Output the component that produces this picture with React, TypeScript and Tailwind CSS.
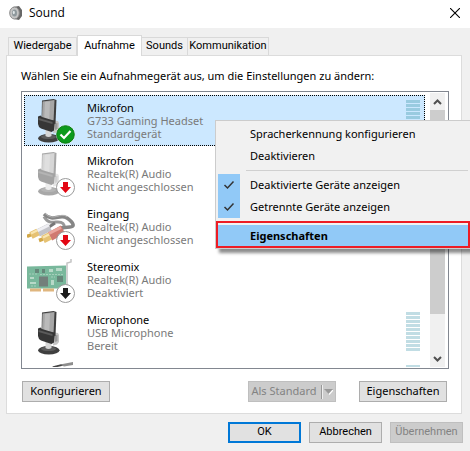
import { ReactNode } from 'react';
import { clsx } from 'clsx';

type Status = 'default' | 'unplugged' | 'disabled';

interface Device {
  name: string;
  driver: string;
  state: string;
  icon: ReactNode;
  status?: Status;
  meter?: boolean;
  selected?: boolean;
}

const Microphone = () => (
  <g>
    <ellipse cx="21.800" cy="42.200" rx="10.700" ry="4.300" fill="#3f3f3f" />
    <ellipse cx="21.500" cy="40.800" rx="7.500" ry="2.300" fill="#5c5c5c" />
    <path d="M18.500 34h6v6q-3 1.800-6 0z" fill="#d6d6d6" />
    <path d="M27 24.500l4 .5 1 2v7l-2 2.500-4 1z" fill="#c6c6c6" />
    <path d="M28 27.500l2.500-.5v6l-2.500 1z" fill="#9a9a9a" />
    <path d="M15 4.500l11.500-1.500 3 1-1 24-14-3z" fill="#3d3d3d" />
    <path d="M15.500 5.500l12-1.500-1 22-11.500-2z" fill="#a6a6a6" />
    <path d="M18 6l5-.6-.8 18.500-5-.8z" fill="#bababa" />
    <path d="M11 20.500l2.500-1 1.500 1.500 10 3 3 .5-1 10-2.500 1.500L14 32.500l-2-1.500-1-3z" fill="#363636" />
    <path d="M11.500 22l14 4v2l-14-4z" fill="#5b5b5b" />
  </g>
);

const LineIn = () => (
  <g fill="none">
    <path d="M17 14.500c6 11 14 2 19 7 2 2 1 4-2 6" stroke="#999" strokeWidth="3" />
    <path d="M17 12c9 9 16-1 23 4 7 5 8 9 3 9l-10 1" stroke="#868686" strokeWidth="3.500" />
    <path d="M18 11.500c9 8.500 15-1.500 22 3" stroke="#b4b4b4" strokeWidth="1" />
    <path d="M22 25l6-4" stroke="#777" strokeWidth="3" />
    <path d="M11 31l12-6" stroke="#c3c3c8" strokeWidth="8" />
    <path d="M10 29l12-6" stroke="#efeff3" strokeWidth="3" />
    <path d="M0 34.500l5-2" stroke="#d3a848" strokeWidth="3.500" />
    <path d="M4 33.500l7-3.500" stroke="#e6c273" strokeWidth="7.500" />
    <path d="M4 31.500l6-3" stroke="#f9e6b0" strokeWidth="2" />
    <path d="M23 34.500l13-7" stroke="#d07a70" strokeWidth="9" />
    <path d="M22 31.500l12-6" stroke="#eaa79e" strokeWidth="3" />
    <path d="M12 38.500l4-1.500" stroke="#d3a848" strokeWidth="3.500" />
    <path d="M16 37.500l7-3.500" stroke="#e6c273" strokeWidth="8" />
    <path d="M16 35.500l6-3" stroke="#f9e6b0" strokeWidth="2" />
  </g>
);

const SoundCard = () => (
  <g>
    <path d="M0 11.500l39-1v23H0z" fill="#79b89c" />
    <path d="M3 33.500h11v3H3zM16 33.500h11v3H16z" fill="#dfb67f" />
    <path d="M40 39V8l4-1V4" fill="none" stroke="#c4c4c4" strokeWidth="1.500" />
    <path d="M12 21.500h9v10h-9z" fill="#737f7b" />
    <path d="M30 21h6v6h-6zM8 14h4v4H8zM15 14h3v4h-3z" fill="#66877a" />
    <path d="M22 14h4v3h-4zM29 13h6v3h-6zM3 22h4v2H3zM3 27h6v2H3zM24 25h3v5h-3z" fill="#b8d9c8" />
    <path d="M2 19h8M13 19.500h24M24 22h4M4 31h6" stroke="#a5cfba" strokeDasharray="2 1" />
  </g>
);

const Jack = () => (
  <g>
    <path d="M25 5.500l10-2.500 2 1.500-9 2z" fill="#444" />
    <path d="M33 3.500l13-2.500v3l-9 1.500z" fill="#8d8d8d" />
  </g>
);

const devices: Device[] = [
  { name: 'Mikrofon', driver: 'G733 Gaming Headset', state: 'Standardgerät', icon: <Microphone />, status: 'default', meter: true, selected: true },
  { name: 'Mikrofon', driver: 'Realtek(R) Audio', state: 'Nicht angeschlossen', icon: <g opacity="0.45"><Microphone /></g>, status: 'unplugged' },
  { name: 'Eingang', driver: 'Realtek(R) Audio', state: 'Nicht angeschlossen', icon: <LineIn />, status: 'unplugged' },
  { name: 'Stereomix', driver: 'Realtek(R) Audio', state: 'Deaktiviert', icon: <SoundCard />, status: 'disabled' },
  { name: 'Microphone', driver: 'USB Microphone', state: 'Bereit', icon: <Microphone />, meter: true },
  { name: '', driver: '', state: '', icon: <Jack />, meter: true },
];

const Badge = ({ status }: { status: Status }) => {
  if (status === 'default') {
    return (
      <g>
        <circle cx="38.500" cy="38.500" r="9.500" fill="#fff" />
        <circle cx="38.500" cy="38.500" r="8.800" fill="#0c9a1c" stroke="#087a14" />
        <path d="M33.500 38.500l3.500 3.500 6.500-7" fill="none" stroke="#fff" strokeWidth="2.200" />
      </g>
    );
  }
  return (
    <g>
      <circle cx="38.500" cy="38.500" r="9" fill="#fff" stroke="#9a9a9a" />
      <path
        d="M36 33h5v5h3l-5.500 6-5.500-6h3z"
        fill={status === 'unplugged' ? '#e30613' : '#1c1c1c'}
      />
    </g>
  );
};

const Meter = ({ active }: { active?: boolean }) => (
  <div className="mr-1 flex w-[14px] shrink-0 flex-col gap-px pt-1">
    {Array.from({ length: 10 }, (_, i) => (
      <span key={i} className={clsx('h-[3px]', active ? 'bg-[#99cbe0]' : 'bg-[#c1dde4]')} />
    ))}
  </div>
);

const DeviceRow = ({ device }: { device: Device }) => (
  <li className="h-[53px]">
    <div
      className={clsx(
        'flex h-[51px] border border-dotted',
        device.selected ? 'border-black bg-[#cce8ff]' : 'border-transparent'
      )}
    >
      <svg className="ml-[2px] h-12 w-12 shrink-0" viewBox="0 0 48 48">
        {device.icon}
        {device.status && <Badge status={device.status} />}
      </svg>
      <div className="ml-3 min-w-0 grow pt-[5px] leading-[13px] whitespace-nowrap text-[#7a7a7a]">
        <p className="text-black">{device.name}</p>
        <p>{device.driver}</p>
        <p>{device.state}</p>
      </div>
      {device.meter && <Meter active={device.selected} />}
    </div>
  </li>
);

const Chevron = ({ up }: { up?: boolean }) => (
  <svg className="h-[17px] w-[15px] shrink-0" viewBox="0 0 15 17" fill="none" stroke="#505050" strokeWidth="2">
    <path d={up ? 'M4 11l3.500-3.500 3.500 3.500' : 'M4 7l3.500 3.500L11 7'} />
  </svg>
);

const tabs = [
  { label: 'Wiedergabe', width: 'w-[69px]' },
  { label: 'Aufnahme', width: 'w-[65px]' },
  { label: 'Sounds', width: 'w-[46px]' },
  { label: 'Kommunikation', width: 'w-[81px]' },
];

const MenuItem = ({ label, checked, bold }: { label: string; checked?: boolean; bold?: boolean }) => (
  <button
    role={checked ? 'menuitemcheckbox' : 'menuitem'}
    aria-checked={checked}
    className={clsx(
      'flex h-[22px] w-full items-center text-left whitespace-nowrap',
      bold && 'bg-[#91c9f7] font-bold'
    )}
  >
    <span className={clsx('mr-[10px] flex h-full w-[22px] items-center justify-center', checked && 'bg-[#91c9f7]')}>
      {checked && (
        <svg className="h-3 w-3" viewBox="0 0 12 12" fill="none" stroke="#333" strokeWidth="1.500">
          <path d="M1.500 6l3 3L10.500 2.500" />
        </svg>
      )}
    </span>
    {label}
  </button>
);

const Separator = () => <hr className="my-[3px] ml-7 border-[#d0d0d0]" />;

const ContextMenu = () => (
  <div
    role="menu"
    className="absolute top-[120px] right-0 left-[215px] border border-r-0 border-[#ccc] bg-[#f1f1f1] px-[2px] pt-[2px] pb-px shadow-[4px_4px_3px_rgba(0,0,0,0.45)]"
  >
    <MenuItem label="Spracherkennung konfigurieren" />
    <MenuItem label="Deaktivieren" />
    <Separator />
    <MenuItem label="Deaktivierte Geräte anzeigen" checked />
    <MenuItem label="Getrennte Geräte anzeigen" checked />
    <Separator />
    <MenuItem label="Eigenschaften" bold />
    <div className="pointer-events-none absolute right-0 bottom-0 left-0 h-[27px] border-2 border-[#ed1c24]" />
  </div>
);

const buttonBase = 'flex h-[21px] items-center justify-center border whitespace-nowrap';
const buttonNormal = 'border-[#adadad] bg-[#e1e1e1] text-black';
const buttonDisabled = 'border-[#bfbfbf] bg-[#ccc] text-[#838383]';

const App = () => {
  return (
    <div className="relative flex min-h-screen flex-col overflow-hidden bg-[#f0f0f0] font-['Noto_Sans','Open_Sans',sans-serif] text-[11px] text-black">
      <header className="flex h-7 shrink-0 items-center bg-white pr-[10px] pb-[3px] pl-[9px]">
        <svg className="h-4 w-[14px]" viewBox="0 0 14 16">
          <path d="M4 2l6-1 3 4v6l-3 4-5-1z" fill="#686868" />
          <ellipse cx="5.500" cy="8" rx="4.800" ry="6" fill="#c4c4c4" stroke="#8b8b8b" />
          <ellipse cx="5.500" cy="8" rx="2.500" ry="3.500" fill="#8e989c" />
          <ellipse cx="4.800" cy="7.500" rx="1" ry="1.800" fill="#e2e8ea" />
        </svg>
        <h1 className="ml-[6px] grow font-['Open_Sans',sans-serif] text-[12px]">Sound</h1>
        <button aria-label="Schließen">
          <svg className="h-[10px] w-[10px]" viewBox="0 0 10 10" stroke="#000" strokeWidth="1.100">
            <path d="M0 0l10 10M10 0L0 10" />
          </svg>
        </button>
      </header>

      <main className="pt-[7px] pr-2 pl-[6px]">
        <div role="tablist" className="flex items-end pl-[2px] font-['Roboto',sans-serif]">
          {tabs.map((tab, i) => (
            <button
              key={tab.label}
              role="tab"
              aria-selected={i === 1}
              className={clsx(
                'flex items-center justify-center border border-b-0 border-[#d9d9d9] whitespace-nowrap',
                tab.width,
                i === 1 ? 'z-10 -mb-px h-[21px] bg-white' : 'h-[18px] bg-[#f0f0f0]',
                i !== 1 && i !== 0 && 'border-l-0'
              )}
            >
              {tab.label}
            </button>
          ))}
        </div>

        <section className="border border-[#dcdcdc] bg-white px-[14px] pt-3 pb-[11px]">
          <p className="leading-4">Wählen Sie ein Aufnahmegerät aus, um die Einstellungen zu ändern:</p>
          <div className="mt-[7px] mr-[-2px] flex h-[278px] overflow-hidden border border-[#828790] p-px">
            <ul className="grow overflow-hidden pt-[2px] pr-[5px] pl-px">
              {devices.map((device, i) => (
                <DeviceRow key={i} device={device} />
              ))}
            </ul>
            <div className="mr-[2px] flex w-[15px] shrink-0 flex-col bg-[#f0f0f0]">
              <Chevron up />
              <div className="h-[204px] bg-[#cdcdcd]" />
              <div className="grow" />
              <Chevron />
            </div>
          </div>
          <div className="mt-3 flex pl-px">
            <button className={clsx(buttonBase, buttonNormal, 'w-[88px]')}>Konfigurieren</button>
            <div className="grow" />
            <button disabled className={clsx(buttonBase, buttonDisabled, 'w-[88px]')}>
              <span>Als Standard</span>
              <svg className="ml-1 h-4 w-3" viewBox="0 0 12 16">
                <path d="M.5 1v14" stroke="#999" />
                <path d="M1.500 1v14" stroke="#eee" />
                <path d="M4 6h9l-4.500 5z" fill="#fff" />
                <path d="M3 5h9l-4.500 5z" fill="#999" />
              </svg>
            </button>
            <button className={clsx(buttonBase, buttonNormal, 'ml-[23px] w-[88px]')}>Eigenschaften</button>
          </div>
        </section>
      </main>

      <footer className="flex justify-end gap-2 pt-2 pr-[7px] pb-2 font-['Roboto',sans-serif]">
        <button className="flex h-[21px] w-[73px] items-center justify-center border-2 border-[#0078d7] bg-[#e1e1e1]">OK</button>
        <button className={clsx(buttonBase, buttonNormal, 'w-[73px]')}>Abbrechen</button>
        <button disabled className={clsx(buttonBase, buttonDisabled, 'w-[73px]')}>Übernehmen</button>
      </footer>

      <ContextMenu />
    </div>
  );
};

export default App;
